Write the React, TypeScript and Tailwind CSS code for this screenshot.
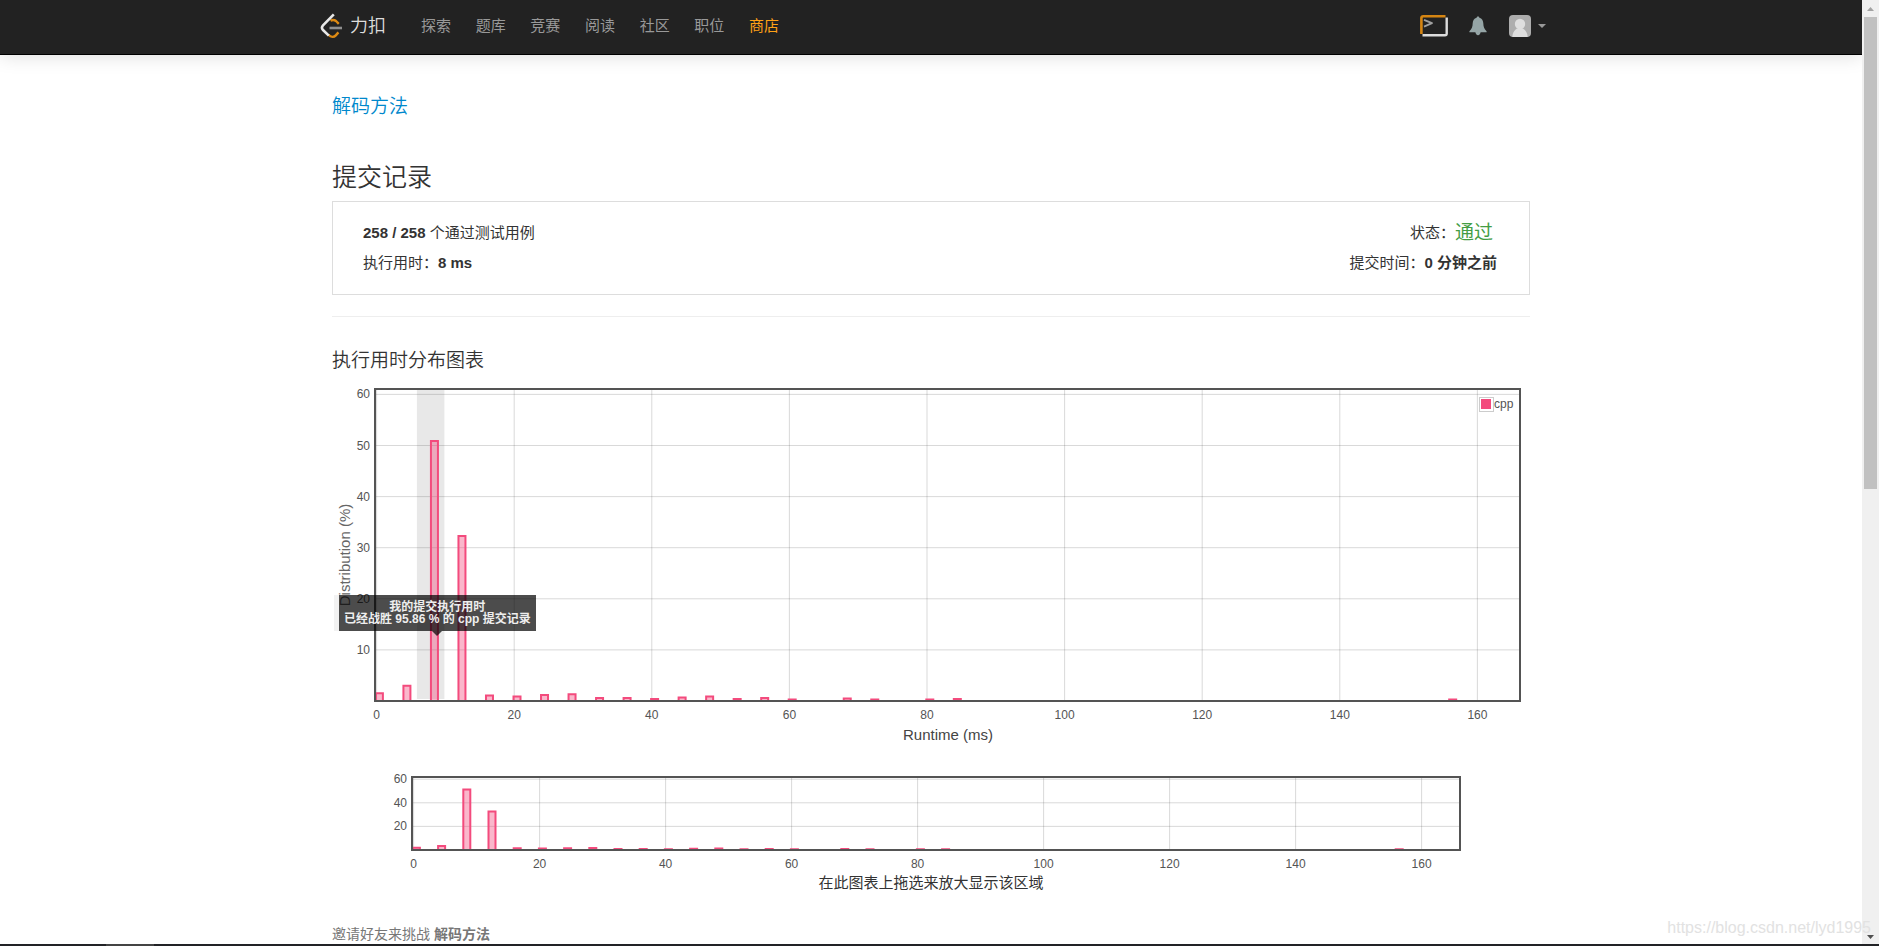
// ---------------------------------------------------------------------------
// Data
// ---------------------------------------------------------------------------
const NAV_LINKS = ['探索', '题库', '竞赛', '阅读', '社区', '职位'];

// [runtime in ms, share of submissions in %]
const DISTRIBUTION: [number, number][] = [
  [0, 1.4], [4, 2.9], [8, 50.8], [12, 32.2], [16, 1], [20, 0.8], [24, 1.1],
  [28, 1.2], [32, 0.5], [36, 0.5], [40, 0.3], [44, 0.6], [48, 0.8], [52, 0.3],
  [56, 0.5], [60, 0.2], [68, 0.4], [72, 0.2], [80, 0.2], [84, 0.3], [156, 0.2],
];

const X_TICKS = [0, 20, 40, 60, 80, 100, 120, 140, 160];

// ---------------------------------------------------------------------------
// Icons
// ---------------------------------------------------------------------------
function LogoMark() {
  return (
    <svg width="24" height="26" viewBox="0 0 24 26" fill="none" strokeLinecap="butt" strokeLinejoin="round">
      <path d="M10.5 7.6C12.5 6.6 14.5 6.8 16 8L18.8 10.8" stroke="#dd8a14" strokeWidth="2.4" />
      <path d="M8.5 21.8C11 24.6 14 24.4 15.8 22.4L18.4 19.4" stroke="#dd8a14" strokeWidth="2.4" />
      <path d="M13.8 1.4L3 12.4C1.6 14 1.6 15.6 3 17L8.8 22.6" stroke="#e8e8e8" strokeWidth="2.6" />
      <path d="M9.5 15H22" stroke="#8f8f8f" strokeWidth="2.6" />
    </svg>
  );
}

function TerminalIcon() {
  return (
    <svg width="28" height="22" viewBox="0 0 28 22" fill="none" strokeLinejoin="round">
      <path d="M1.4 19V3Q1.4 1.3 3.2 1.3H25.5" stroke="#d58512" strokeWidth="2.6" />
      <path d="M26.7 2.5V18.5Q26.7 20.3 25 20.3H2.5" stroke="#dcdcdc" strokeWidth="2.4" />
      <path d="M4 4.8L12 8.2L4 11.6" stroke="#a0a0a0" strokeWidth="1.8" />
    </svg>
  );
}

function BellIcon() {
  return (
    <svg width="18" height="20" viewBox="0 0 18 20" fill="#95a5a6">
      <path d="M9 0.5C9.8 0.5 10.3 1 10.4 1.7C13 2.4 14.2 4.6 14.3 7.3C14.4 11 15.2 13.2 17.6 15.2V16.2H0.4V15.2C2.8 13.2 3.6 11 3.7 7.3C3.8 4.6 5 2.4 7.6 1.7C7.7 1 8.2 0.5 9 0.5Z" />
      <path d="M6.4 16H11.6C11.4 18 10.4 19.2 9 19.2C7.6 19.2 6.6 18 6.4 16Z" />
    </svg>
  );
}

function Avatar() {
  return (
    <svg width="22" height="22" viewBox="0 0 22 22">
      <rect width="22" height="22" rx="4" fill="#adadad" />
      <circle cx="11" cy="9" r="5.2" fill="#dedede" />
      <path d="M3.3 22C3.5 17.5 6 14.6 8 13.5H14C16 14.6 18.5 17.5 18.7 22Z" fill="#dedede" />
    </svg>
  );
}

// ---------------------------------------------------------------------------
// Charts
// ---------------------------------------------------------------------------
interface PlotProps {
  left: number;
  top: number;
  width: number;
  height: number;
  xUnit: number;
  yUnit: number;
  yTicks: number[];
  highlight?: [number, number];
}

function Plot({ left, top, width, height, xUnit, yUnit, yTicks, highlight }: PlotProps) {
  const bottom = top + height;
  const x = (v: number) => left + 1.6 + v * xUnit;
  const y = (v: number) => bottom - v * yUnit;

  return (
    <g>
      {highlight && (
        <rect
          x={x(highlight[0]) - 1}
          y={top}
          width={(highlight[1] - highlight[0]) * xUnit}
          height={height - 2}
          fill="#e8e8e8"
        />
      )}
      <g stroke="#545454" strokeOpacity="0.22">
        {X_TICKS.map(v => <path key={v} d={`M${x(v)} ${top}V${bottom}`} />)}
        {yTicks.map(v => <path key={v} d={`M${left} ${y(v)}H${left + width}`} />)}
      </g>
      {DISTRIBUTION.map(([v, pct]) => (
        <path
          key={v}
          d={`M${x(v) - 0.7} ${bottom}V${y(pct) - 0.5}h7V${bottom}`}
          fill="#f34b7d"
          fillOpacity="0.4"
          stroke="#f34b7d"
          strokeWidth="2"
        />
      ))}
      <rect x={left} y={top} width={width} height={height} fill="none" stroke="#545454" strokeWidth="2" />
      <g fill="#545454" fontSize="12">
        {X_TICKS.map(v => <text key={v} x={x(v)} y={bottom + 18} textAnchor="middle">{v}</text>)}
        {yTicks.map(v => <text key={v} x={left - 5} y={y(v) + 4} textAnchor="end">{v}</text>)}
      </g>
    </g>
  );
}

function RuntimeChart() {
  return (
    <div className="relative">
      <svg className="block h-auto w-full" viewBox="0 0 1198 380">
        <text x="18" y="181" transform="rotate(-90 18 181)" textAnchor="middle" fontSize="15" fill="#666">
          Distribution (%)
        </text>
        <Plot
          left={43}
          top={15}
          width={1145}
          height={312}
          xUnit={6.88}
          yUnit={5.11}
          yTicks={[10, 20, 30, 40, 50, 60]}
          highlight={[6, 10]}
        />
        <rect x="1147.5" y="23.5" width="14" height="14" fill="#fff" stroke="#ccc" />
        <rect x="1149" y="25" width="10" height="10" fill="#f34b7d" />
        <text x="1162" y="34" fontSize="12" fill="#545454">cpp</text>
        <text x="616" y="366" textAnchor="middle" fontSize="15" fill="#444">Runtime (ms)</text>
      </svg>

      {/* Tooltip over the highlighted bar */}
      <div className="absolute top-[221px] left-0.5 border-l-5 border-black/5">
        <div className="bg-black/70 px-[5px] py-1.5 text-center text-xs leading-3 font-bold whitespace-nowrap text-[#eee]">
          <p>我的提交执行用时</p>
          <p>已经战胜 95.86 % 的 cpp 提交记录</p>
        </div>
        <svg className="absolute top-full left-1/2 -translate-x-1/2" width="10" height="5" viewBox="0 0 10 5">
          <path d="M0 0H10L5 5Z" fill="#000" fillOpacity="0.7" />
        </svg>
      </div>
    </div>
  );
}

function OverviewChart() {
  return (
    <svg className="block h-auto w-full" viewBox="0 0 1198 146">
      <Plot left={80} top={23} width={1048} height={73} xUnit={6.3} yUnit={1.18} yTicks={[20, 40, 60]} />
      <text x="599" y="134" textAnchor="middle" fontSize="15" fill="#333">在此图表上拖选来放大显示该区域</text>
    </svg>
  );
}

// ---------------------------------------------------------------------------
// Page chrome
// ---------------------------------------------------------------------------
function Navbar() {
  return (
    <header className="border-b border-black bg-[#222] shadow-[0_0_20px_rgba(0,0,0,0.15)]">
      <div className="mx-auto flex h-[54px] max-w-[1230px] items-center pb-0.5 pl-1">
        <a href="#" className="flex items-center gap-1.5 text-lg leading-6 font-[350] text-[#ddd]" aria-label="力扣">
          <LogoMark />
          <span>力扣</span>
        </a>
        <nav className="ml-[35px] flex w-[358px] justify-between text-[15px] text-[#999]">
          {NAV_LINKS.map(label => <a key={label} href="#">{label}</a>)}
          <a href="#" className="text-[#ffa116]">商店</a>
        </nav>
        <div className="ml-auto flex items-center">
          <button type="button" aria-label="Playground"><TerminalIcon /></button>
          <button type="button" aria-label="通知" className="ml-[21px]"><BellIcon /></button>
          <button type="button" aria-label="账号" className="ml-[22px] flex items-center gap-[7px]">
            <Avatar />
            <svg width="8" height="4" viewBox="0 0 8 4"><path d="M0 0H8L4 4Z" fill="#999" /></svg>
          </button>
        </div>
      </div>
    </header>
  );
}

function Scrollbar() {
  return (
    <div className="flex w-[17px] shrink-0 flex-col items-center bg-[#f0f0f0]">
      <svg width="17" height="17" viewBox="0 0 17 17"><path d="M5 11L8.5 7L12 11Z" fill="#a3a3a3" /></svg>
      <div className="h-1/2 w-[13px] bg-[#c1c1c1]" />
      <svg className="mt-auto" width="17" height="17" viewBox="0 0 17 17"><path d="M5 8H12L8.5 12Z" fill="#505050" /></svg>
    </div>
  );
}

// ---------------------------------------------------------------------------
// App
// ---------------------------------------------------------------------------
export default function App() {
  return (
    <div className="relative flex h-screen flex-col overflow-hidden bg-white font-['Liberation_Sans','Noto_Sans_CJK_SC',sans-serif] text-[#333]">
      <div className="flex min-h-0 flex-1">
        <div className="min-w-0 flex-1 overflow-hidden">
          <Navbar />
          <main className="mx-auto max-w-[1198px] pt-[38px]">
            <h4 className="text-[19px] leading-7 font-[350] text-[#0088cc]">
              <a href="#">解码方法</a>
            </h4>
            <h3 className="mt-[38px] text-[25px] leading-9 font-[350]">提交记录</h3>

            <section className="mt-1.5 flex justify-between border border-[#ddd] py-4 pr-8 pl-[30px] text-[15px] leading-[30px]">
              <div>
                <p><b>258 / 258</b> 个通过测试用例</p>
                <p>执行用时：<b>8 ms</b></p>
              </div>
              <div className="text-right">
                <p className="flex items-center justify-end pr-1">
                  状态：<span className="text-[19px] text-[#449d44]">通过</span>
                </p>
                <p>提交时间：<b>0 分钟之前</b></p>
              </div>
            </section>

            <hr className="mt-[21px] border-[#eee]" />

            <h4 className="mt-[31px] text-[19px] leading-[26px] font-[350]">执行用时分布图表</h4>
            <RuntimeChart />
            <OverviewChart />

            <p className="mt-6 text-sm leading-5 text-[#777]">邀请好友来挑战 <b>解码方法</b></p>
          </main>
        </div>
        <Scrollbar />
      </div>

      {/* Top edge of the taskbar */}
      <div className="flex h-0.5 shrink-0 bg-[#222326]">
        <div className="ml-[106px] w-12 bg-[#444]" />
      </div>

      <div className="absolute right-2 bottom-2 text-base leading-5 text-[#e2e2e2]">
        https://blog.csdn.net/lyd1995
      </div>
    </div>
  );
}
